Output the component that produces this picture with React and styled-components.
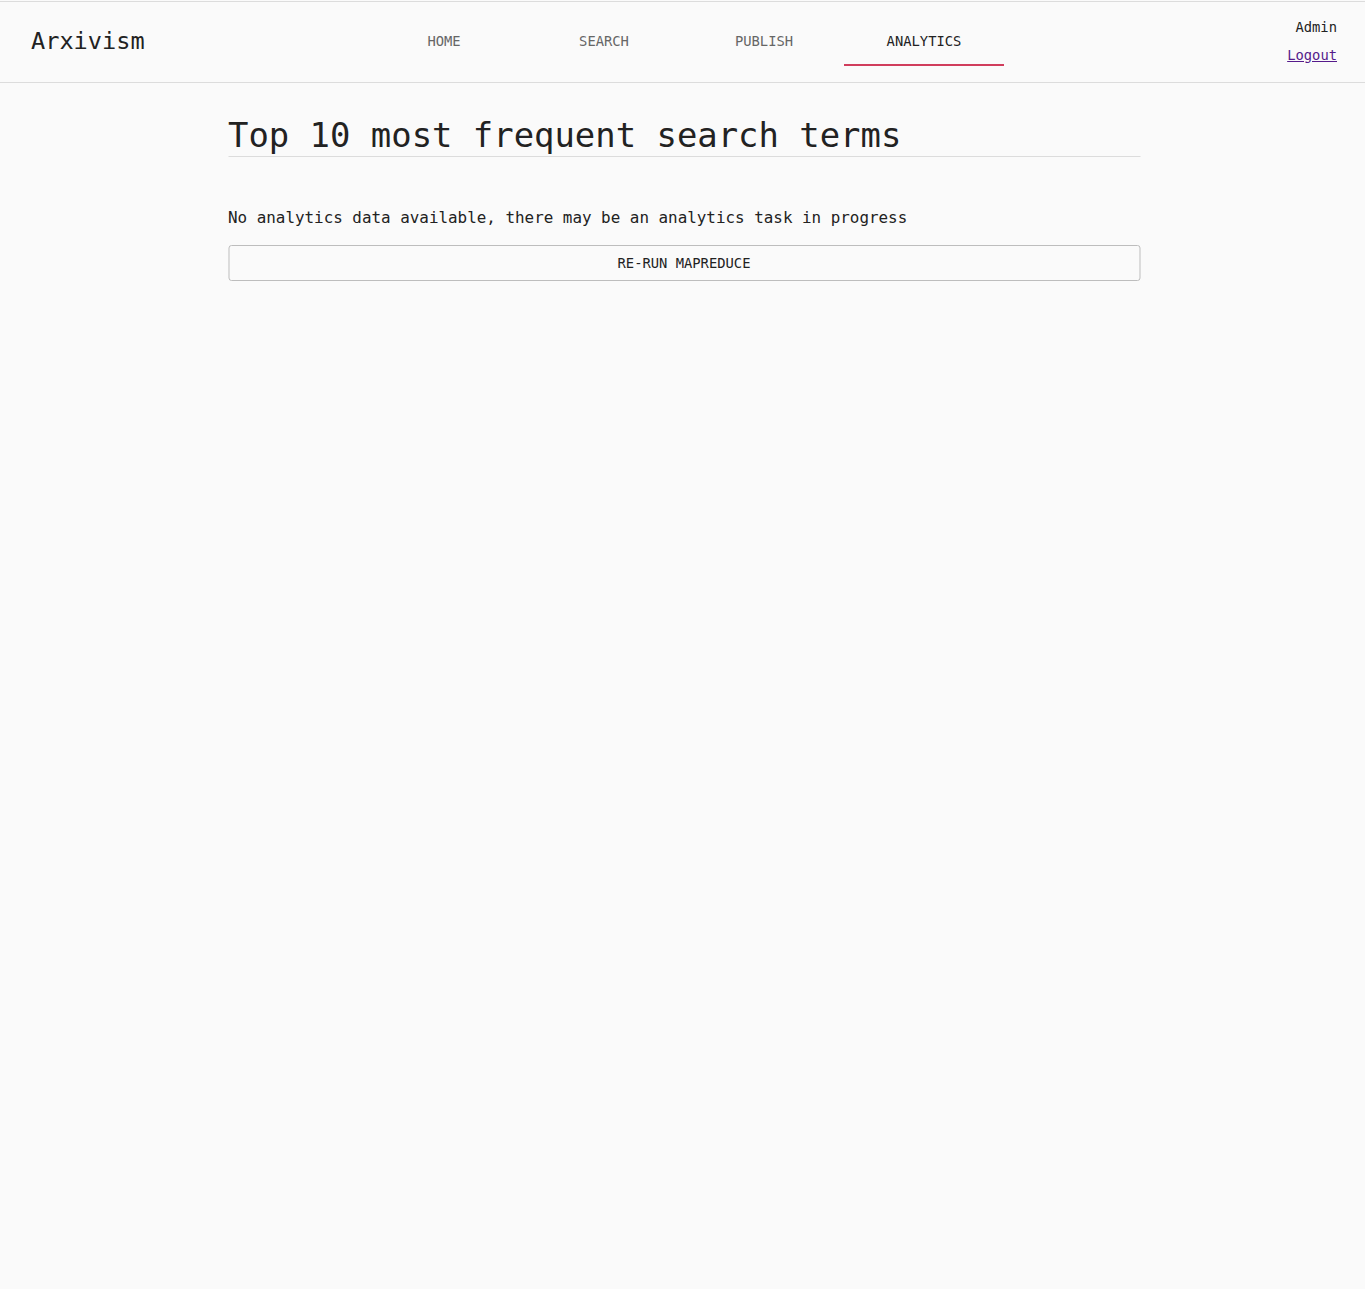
import React from "react";
import styled, { createGlobalStyle } from "styled-components";

const Global = createGlobalStyle`
  html, body { margin: 0; padding: 0; background: #fafafa; }
  body { font-family: "DejaVu Sans Mono", "Liberation Mono", monospace; color: #222; min-height: 1289px; }
`;

const Header = styled.header`
  margin-top: 1px;
  border-top: 1px solid #dcdcdc;
  border-bottom: 1px solid #dcdcdc;
  height: 80px;
  display: grid;
  grid-template-columns: 1fr auto 1fr;
  align-items: center;
  padding: 0 28px 0 31px;
`;

const Logo = styled.div`
  font-size: 23.6px;
  color: #222;
  margin-top: -2px;
`;

const Nav = styled.nav`
  display: flex;
  align-self: start;
`;

const Tab = styled.a`
  width: 160px;
  height: 64px;
  box-sizing: border-box;
  display: flex;
  align-items: center;
  justify-content: center;
  padding-top: 16px;
  font-size: 13.8px;
  color: ${(p) => (p.$active ? "#222" : "#666")};
  text-decoration: none;
  border-bottom: 2px solid ${(p) => (p.$active ? "#d03d5c" : "transparent")};
`;

const User = styled.div`
  justify-self: end;
  display: flex;
  flex-direction: column;
  align-items: flex-end;
  gap: 12px;
  font-size: 13.8px;
  margin-top: -2px;
`;

const Logout = styled.a`
  color: #551a8b;
  text-decoration: underline;
`;

const Main = styled.main`
  width: 912px;
  margin: 0 auto;
  padding-top: 33px;
  transform: translateX(1.5px);
`;

const Title = styled.h1`
  margin: 0;
  font-weight: normal;
  font-size: 33.9px;
  line-height: 40px;
  border-bottom: 1px solid #dcdcdc;
`;

const Message = styled.p`
  margin: 50px 0 0;
  font-size: 15.9px;
  line-height: 22px;
`;

const Button = styled.button`
  margin-top: 16px;
  width: 100%;
  height: 36px;
  background: #fafafa;
  border: 1px solid #bdbdbd;
  border-radius: 3px;
  font-family: inherit;
  font-size: 13.8px;
  color: #222;
  cursor: pointer;
`;

export default function App() {
  return (
    <>
      <Global />
      <Header>
        <Logo>Arxivism</Logo>
        <Nav>
          <Tab>HOME</Tab>
          <Tab>SEARCH</Tab>
          <Tab>PUBLISH</Tab>
          <Tab $active>ANALYTICS</Tab>
        </Nav>
        <User>
          <span>Admin</span>
          <Logout href="#">Logout</Logout>
        </User>
      </Header>
      <Main>
        <Title>Top 10 most frequent search terms</Title>
        <Message>No analytics data available, there may be an analytics task in progress</Message>
        <Button>RE-RUN MAPREDUCE</Button>
      </Main>
    </>
  );
}
